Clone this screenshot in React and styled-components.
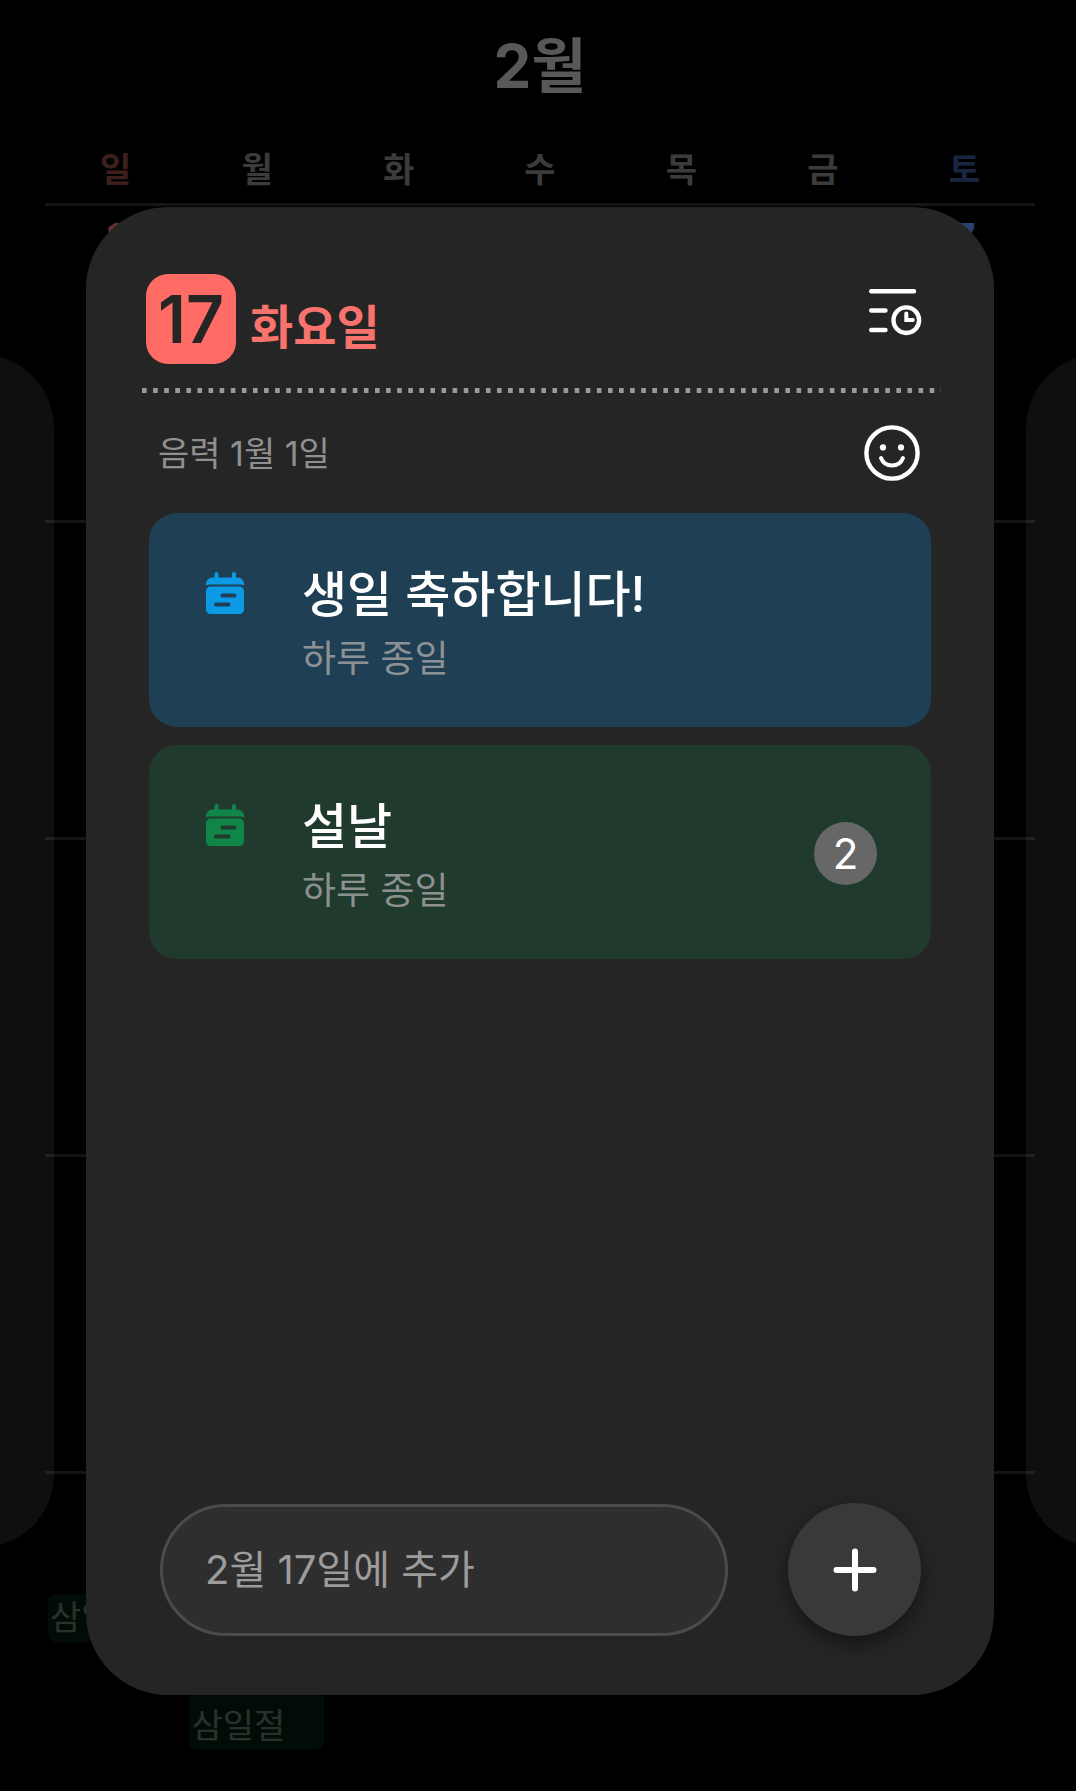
import React from 'react'
import styled, { createGlobalStyle } from 'styled-components'

//Calendar data
const weekdays = [
  { label: '일', tone: '#3d201e' },
  { label: '월', tone: '#3b3b3b' },
  { label: '화', tone: '#3b3b3b' },
  { label: '수', tone: '#3b3b3b' },
  { label: '목', tone: '#3b3b3b' },
  { label: '금', tone: '#3b3b3b' },
  { label: '토', tone: '#192640' },
]

const weeks = [
  {
    id: 'w1',
    days: [
      { col: 1, date: '1', tone: '#6b302d' },
      { col: 7, date: '7', tone: '#254272' },
    ],
  },
  { id: 'w2', days: [] },
  { id: 'w3', days: [] },
  { id: 'w4', days: [] },
  {
    id: 'w5',
    days: [
      { col: 1, holiday: '삼일절' },
      { col: 2, holiday: '삼일절', tall: true },
    ],
  },
]

const events = [
  {
    id: 'birthday',
    title: '생일 축하합니다!',
    time: '하루 종일',
    background: '#1f4054',
    accent: '#0c9ae6',
  },
  {
    id: 'newyear',
    title: '설날',
    time: '하루 종일',
    background: '#203a2e',
    accent: '#108548',
    count: 2,
  },
]

//Icons
const ScheduleIcon = () => (
  <svg width="60" height="60" viewBox="0 0 60 60" fill="none" stroke="#fff" strokeWidth="4.4" strokeLinecap="round">
    <path d="M9.2 2.2H52M9.2 21.5H23.5M9.2 41H23.5" />
    <circle cx="44.3" cy="31.2" r="12.8" />
    <path d="M44.3 24.5V31H50.8" strokeWidth="4" strokeLinejoin="miter" />
  </svg>
)

const SmileIcon = () => (
  <svg width="60" height="60" viewBox="0 0 60 60" fill="none" stroke="#fff" strokeWidth="4.4" strokeLinecap="round">
    <circle cx="30" cy="30" r="25.6" />
    <circle cx="21" cy="24.4" r="3.1" fill="#fff" stroke="none" />
    <circle cx="39" cy="24.4" r="3.1" fill="#fff" stroke="none" />
    <path d="M19 35C23 45 37 45 41 35" strokeWidth="4" />
  </svg>
)

const EventIcon = ({ color, cut }) => (
  <svg width="38" height="42" viewBox="0 0 38 42" fill={color}>
    <path d="M10.5 2V9M28 2V9" stroke={color} strokeWidth="4" strokeLinecap="round" />
    <path d="M0 13.5V12A6.5 6.5 0 0 1 6.5 5.5H31.5A6.5 6.5 0 0 1 38 12V13.5A6 6 0 0 0 33.5 12.6H4.5A6 6 0 0 0 0 13.5Z" />
    <rect x="0" y="14.6" width="38" height="27.4" rx="4.5" />
    <path d="M16.5 23.6H28.5M10 32.4H22.5" stroke={cut} strokeWidth="4" strokeLinecap="round" />
  </svg>
)

const PlusIcon = () => (
  <svg width="44" height="44" viewBox="0 0 44 44" fill="none" stroke="#fff" strokeWidth="6" strokeLinecap="round">
    <path d="M22 3.5V40.5M3.5 22H40.5" />
  </svg>
)

const EventItem = ({ event }) => (
  <EventCard $background={event.background}>
    <EventMark>
      <EventIcon color={event.accent} cut={event.background} />
    </EventMark>
    <EventText>
      <EventTitle>{event.title}</EventTitle>
      <EventTime>{event.time}</EventTime>
    </EventText>
    {event.count && <Count>{event.count}</Count>}
  </EventCard>
)

const App = () => {
  return (
    <>
      <GlobalStyle />
      <Screen>
        <Calendar>
          <MonthTitle>2월</MonthTitle>
          <Weekdays>
            {weekdays.map((day) => (
              <Weekday key={day.label} $tone={day.tone}>
                {day.label}
              </Weekday>
            ))}
          </Weekdays>
          <Weeks>
            {weeks.map((week) => (
              <Week key={week.id}>
                {week.days.map((day) => (
                  <Day key={day.col} $col={day.col}>
                    <DateNumber $tone={day.tone}>{day.date}</DateNumber>
                    {day.holiday && <Holiday $tall={day.tall}>{day.holiday}</Holiday>}
                  </Day>
                ))}
              </Week>
            ))}
          </Weeks>
        </Calendar>

        <Overlay>
          <Peek $side="left" />
          <Sheet>
            <SheetHeader>
              <DayBadge>17</DayBadge>
              <DayName>화요일</DayName>
              <IconButton type="button" aria-label="일정">
                <ScheduleIcon />
              </IconButton>
            </SheetHeader>
            <Divider />
            <LunarRow>
              <LunarDate>음력 1월 1일</LunarDate>
              <IconButton type="button" aria-label="스티커">
                <SmileIcon />
              </IconButton>
            </LunarRow>
            <EventList>
              {events.map((event) => (
                <EventItem key={event.id} event={event} />
              ))}
            </EventList>
            <SheetFooter>
              <QuickAdd type="text" placeholder="2월 17일에 추가" aria-label="2월 17일에 추가" />
              <AddButton type="button" aria-label="추가">
                <PlusIcon />
              </AddButton>
            </SheetFooter>
          </Sheet>
          <Peek $side="right" />
        </Overlay>
      </Screen>
    </>
  )
}

const GlobalStyle = createGlobalStyle`
  * {
    box-sizing: border-box;
    margin: 0;
    padding: 0;
  }
  body {
    background: #000;
    font-family: Inter, 'Noto Sans CJK KR', sans-serif;
  }
  button, input {
    font-family: inherit;
    border: none;
    background: none;
  }
`

//Dimmed calendar
const Screen = styled.div`
  position: relative;
  min-height: 100vh;
  display: flex;
  background: #000;
  overflow: hidden;
`
const Calendar = styled.div`
  flex: 1;
  display: flex;
  flex-direction: column;
  padding: 0 41px 3px 45px;
`
const MonthTitle = styled.h1`
  padding-top: 22px;
  font-size: 60px;
  line-height: 88px;
  font-weight: 700;
  text-align: center;
  color: #585858;
`
const Weekdays = styled.div`
  display: grid;
  grid-template-columns: repeat(7, 1fr);
  padding: 36px 0 9px;
`
const Weekday = styled.span`
  font-size: 34px;
  line-height: 48px;
  font-weight: 700;
  text-align: center;
  color: ${(props) => props.$tone};
`
const Weeks = styled.div`
  flex: 1;
  display: grid;
  grid-template-rows: repeat(5, 1fr);
`
const Week = styled.div`
  display: grid;
  grid-template-columns: repeat(7, 1fr);
  border-top: 3px solid #141414;
`
const Day = styled.div`
  grid-column: ${(props) => props.$col};
  padding: 12px 4px 0 3px;
`
const DateNumber = styled.div`
  height: 108px;
  font-size: 40px;
  line-height: 40px;
  font-weight: 700;
  text-align: center;
  color: ${(props) => props.$tone};
`
const Holiday = styled.div`
  display: flex;
  align-items: flex-end;
  height: ${(props) => (props.$tall ? 156 : 48)}px;
  padding: 0 2px;
  border-radius: 8px;
  font-size: 34px;
  line-height: 48px;
  color: #2a312d;
  background: #020c07;
`

//Day sheet
const Overlay = styled.div`
  position: absolute;
  inset: 0;
  display: grid;
  grid-template-columns: 54px minmax(0, 1fr) 50px;
  gap: 32px;
  padding: 207px 0 96px;
`
const Peek = styled.div`
  margin: ${(props) => (props.$side === 'left' ? '147px 0 147px -28px' : '147px -28px 147px 0')};
  background: rgba(255, 255, 255, 0.06);
  border-radius: ${(props) => (props.$side === 'left' ? '0 74px 74px 0' : '74px 0 0 74px')};
`
const Sheet = styled.section`
  display: flex;
  flex-direction: column;
  padding: 67px 0 59px;
  border-radius: 82px;
  background: #252525;
`
const SheetHeader = styled.header`
  display: flex;
  align-items: center;
  height: 90px;
  padding: 0 72px 0 60px;
`
const DayBadge = styled.span`
  flex: none;
  width: 90px;
  height: 90px;
  border-radius: 22px;
  font-size: 66px;
  line-height: 90px;
  font-weight: 600;
  text-align: center;
  color: #252525;
  background: #ff6c65;
`
const DayName = styled.h2`
  flex: 1;
  padding: 16px 0 0 14px;
  font-size: 47px;
  line-height: 72px;
  font-weight: 700;
  color: #f8736d;
`
const IconButton = styled.button`
  flex: none;
  width: 60px;
  height: 60px;
  svg {
    display: block;
  }
`
const Divider = styled.div`
  height: 5px;
  margin: 24px 53px 0 56px;
  background-image: linear-gradient(to right, #9a9a9a 5px, transparent 5px);
  background-size: 11px 5px;
  background-repeat: space no-repeat;
`
const LunarRow = styled.div`
  display: flex;
  align-items: center;
  justify-content: space-between;
  height: 120px;
  padding: 0 72px;
`
const LunarDate = styled.p`
  padding-top: 2px;
  font-size: 34px;
  line-height: 48px;
  color: #909090;
`
const EventList = styled.ul`
  flex: 1;
  display: flex;
  flex-direction: column;
  gap: 18px;
  padding: 0 63px;
  list-style: none;
`
const EventCard = styled.li`
  display: flex;
  align-items: center;
  padding: 44px 54px 42px 57px;
  border-radius: 28px;
  background: ${(props) => props.$background};
`
const EventMark = styled.span`
  align-self: flex-start;
  width: 96px;
  padding-top: 15px;
  svg {
    display: block;
  }
`
const EventText = styled.div`
  flex: 1;
`
const EventTitle = styled.h3`
  font-size: 49px;
  line-height: 76px;
  font-weight: 500;
  color: #fff;
`
const EventTime = styled.p`
  font-size: 37px;
  line-height: 52px;
  color: rgba(160, 160, 160, 0.85);
`
const Count = styled.span`
  width: 63px;
  height: 63px;
  border-radius: 50%;
  font-size: 42px;
  line-height: 63px;
  text-align: center;
  color: #fff;
  background: #676767;
`
const SheetFooter = styled.footer`
  display: flex;
  align-items: center;
  gap: 60px;
  padding: 0 73px 0 74px;
`
const QuickAdd = styled.input`
  flex: 1;
  width: 0;
  height: 132px;
  padding: 0 42px;
  border: 3px solid #4b4b4b;
  border-radius: 66px;
  font-size: 40px;
  color: #fff;
  background: #2e2e2e;
  &::placeholder {
    color: #9c9c9c;
    opacity: 1;
  }
`
const AddButton = styled.button`
  flex: none;
  display: flex;
  align-items: center;
  justify-content: center;
  width: 133px;
  height: 133px;
  border-radius: 50%;
  background: #39393b;
  box-shadow: 0 8px 20px rgba(0, 0, 0, 0.45);
`

export default App
